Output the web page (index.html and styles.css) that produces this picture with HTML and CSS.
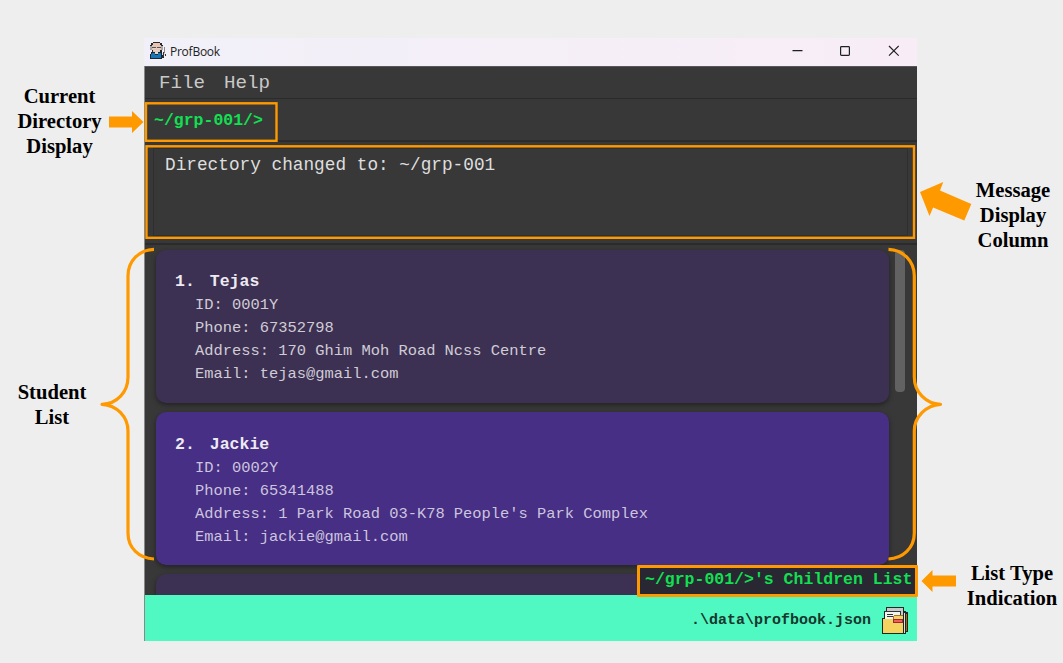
FILE: index.html
```html
<!DOCTYPE html>
<html lang="en">
<head>
<meta charset="utf-8">
<title>ProfBook</title>
<link rel="stylesheet" href="styles.css">
</head>
<body>
<main class="window">
  <header class="titlebar">
    <svg class="logo" width="18" height="18" viewBox="0 0 18 18">
      <path fill="#26262b" d="M4 0h7v1h2v2h1v5h-1v2H3V8H1V3h1V1h2z"/>
      <path fill="#e8c5b3" d="M4 1h7v2h1v5h-1v2H4V8H3V3h1z"/>
      <path fill="#aaa5a8" d="M1 4h2v4H1zM12 4h2v4h-2z"/>
      <path fill="#55525a" d="M3 5h4v1H3zM8 5h4v1H8z"/>
      <path fill="#ddd7d5" d="M4 6h3v1H4zM8 6h3v1H8zM5 8h5v1H5z"/>
      <path fill="#1b2634" d="M2 10h11v2h2v4h-2v1H1v-5h1z"/>
      <path fill="#1675b4" d="M3 11h3v2h3v-2h3v5H2v-4h1z"/>
      <path fill="#f0d5c4" d="M6 10h3v2H6zM13 11h3v2h-3z"/>
      <path fill="#8c8589" d="M15 5h1v6h-1z"/>
      <path fill="#34323a" d="M14 10h1v5h-1zM16 12h1v2h-1z"/>
    </svg>
    <span class="app-name">ProfBook</span>
    <svg class="controls" width="108" height="12" viewBox="0 0 108 12" fill="none" stroke="#202020" stroke-width="1.2">
      <path d="M1.500 5.600h10M98 1l9.700 9.700M107.700 1L98 10.700"/>
      <rect x="49.600" y="1.600" width="8.800" height="8.800" rx=".8"/>
    </svg>
  </header>
  <nav class="menu"><span>File</span><span>Help</span></nav>
  <section class="directory">~/grp-001/&gt;</section>
  <section class="message"><div class="message-box">Directory changed to: ~/grp-001</div></section>
  <section class="students">
    <div class="cards">
      <article class="card">
        <h2><span>1.</span><span>Tejas</span></h2>
        <p>ID: 0001Y</p><p>Phone: 67352798</p><p>Address: 170 Ghim Moh Road Ncss Centre</p><p>Email: tejas@gmail.com</p>
      </article>
      <article class="card card-alt">
        <h2><span>2.</span><span>Jackie</span></h2>
        <p>ID: 0002Y</p><p>Phone: 65341488</p><p>Address: 1 Park Road 03-K78 People's Park Complex</p><p>Email: jackie@gmail.com</p>
      </article>
      <article class="card"></article>
    </div>
    <div class="scrollbar"></div>
  </section>
  <footer class="footer">
    <span>.\data\profbook.json</span>
    <svg width="26" height="27" viewBox="0 0 26 27" shape-rendering="crispEdges">
      <path fill="#1c2825" d="M4 0h18v4h2v1h2v20h-2v2H0V11h2V4h2z"/>
      <path fill="#c7cac9" d="M5 1h16v9H5z"/>
      <path fill="#f3f3f2" d="M3 5h15v7H3z"/>
      <path fill="#303633" d="M3 4h15v1H3zM18 4h1v5h-1zM5 7h6v1H5zM5 9h8v1H5z"/>
      <path fill="#a9680a" d="M24 7h1v17h-1z"/>
      <path fill="#e7dfcf" d="M22 6h1v20h-1z"/>
      <path fill="#f4d35e" d="M1 12h10V9h2V8h8v18H1z"/>
      <path fill="#9c762b" d="M12 8h9v1h-9zM11 9h1v3h-1z"/>
      <path fill="#9f2831" d="M11 12h10v4H11z"/>
      <path fill="#f25b62" d="M12 13h8v2h-8z"/>
    </svg>
  </footer>
</main>
<div class="list-type">~/grp-001/&gt;'s Children List</div>
<svg class="marks" width="1063" height="663" viewBox="0 0 1063 663">
  <g fill="none" stroke="#ff9900" stroke-width="2.4">
    <rect x="146" y="103.3" width="130.5" height="37.5"/>
    <rect x="146.5" y="146.3" width="767.5" height="91.5"/>
  </g>
  <g fill="none" stroke="#ff9900" stroke-width="3.2" stroke-linejoin="round">
    <path d="M154 249.4C139 249.8 128 261 128 276V377C128 392 117 404 102 404.3C117 405 128 417 128 431V533C128 548 139 558.5 154 559"/>
    <path d="M888.500 249.400C903 249.800 914.300 261 914.300 276V377C914.300 392 926 404 940.500 404.300C926 405 914.300 417 914.300 431V533C914.300 548 903 558.500 888.500 559"/>
  </g>
  <g fill="#ff9900">
    <path d="M109 116.500h23v-5.500l11.500 11-11.500 11v-5.500h-23z"/>
    <path d="M920 192l23.300-10-3.300 8.500 31.300 13.500-7 16.500-31.200-13-3.600 8.500z"/>
    <path d="M956 575.500h-23.500v-5.500l-11 11 11 11v-5.500h23.500z"/>
  </g>
</svg>
<div class="note note-directory">Current<br>Directory<br>Display</div>
<div class="note note-message">Message<br>Display<br>Column</div>
<div class="note note-students">Student<br>List</div>
<div class="note note-type">List Type<br>Indication</div>
</body>
</html>
```
FILE: styles.css
```css
* { box-sizing: border-box; }
body {
  margin: 0;
  padding: 38px 0 0 144px;
  width: 1063px;
  height: 663px;
  overflow: hidden;
  background: #eeeeee;
  font-family: "Liberation Mono", monospace;
}
.window {
  width: 773px;
  height: 603px;
  display: flex;
  flex-direction: column;
  background: #383838;
  border-left: 1px solid #888;
}
.titlebar {
  flex: 0 0 28px;
  display: flex;
  align-items: center;
  margin-left: -1px;
  padding: 0 18px 2px 5px;
  background: linear-gradient(90deg, #f1f0f8, #f8edf7);
}
.app-name {
  margin: 1px 0 0 3px;
  font: 12px/20px "Open Sans", sans-serif;
  letter-spacing: -.25px;
  color: #222;
}
.controls { margin-left: auto; }
.menu {
  flex: 0 0 32px;
  min-height: 0;
  display: flex;
  gap: 19px;
  padding-left: 14px;
  border-top: 1px solid #575757;
  font-size: 19.2px;
  line-height: 32px;
  color: #c9c9c9;
}
.directory {
  flex: 0 0 44px;
  height: 44px;
  min-height: 0;
  padding-left: 9px;
  border-top: 1px solid #2b2b2b;
  border-bottom: 2px solid #2b2b2b;
  font-size: 16.5px;
  line-height: 44px;
  font-weight: bold;
  color: #12df51;
}
.message {
  flex: 0 0 103px;
  padding: 6px 9px 7px 8px;
  border-bottom: 2px solid #2b2b2b;
}
.message-box {
  height: 88px;
  padding-left: 11px;
  border: 1px solid #2f2f2f;
  font-size: 17.75px;
  line-height: 32px;
  color: #dedede;
}
.students {
  flex: 0 0 350px;
  min-height: 0;
  display: flex;
  gap: 6px;
  padding: 5px 12px 0 11px;
  overflow: hidden;
}
.cards {
  width: 733px;
  display: flex;
  flex-direction: column;
  gap: 9px;
}
.card {
  flex: 0 0 153px;
  padding: 20px 0 0 39px;
  border-radius: 10px;
  background: #3d3153;
  box-shadow: 0 2px 5px rgba(0, 0, 0, .4);
  color: #d0ccd6;
  font-size: 15.42px;
  line-height: 23px;
}
.card-alt { padding-top: 21px; background: #462f84; color: #cdc4df; }
.card h2 {
  display: flex;
  gap: 15px;
  margin: 0 0 1px -20px;
  color: #eeeaf2;
  font-size: 16.5px;
  line-height: 23px;
}
.card p { margin: 0; }
.scrollbar {
  width: 10px;
  height: 142px;
  border-radius: 4px;
  background: #626262;
}
.footer {
  flex: 0 0 46px;
  display: flex;
  align-items: center;
  justify-content: flex-end;
  gap: 11px;
  padding: 4px 9px 0 0;
  background: #51f9c2;
  color: #16372d;
  font-size: 15px;
  font-weight: bold;
}
.list-type {
  position: absolute;
  left: 637px;
  top: 565px;
  width: 281px;
  height: 32px;
  padding-left: 5px;
  border: 3px solid #ff9900;
  border-radius: 1px;
  background: #292731;
  color: #12df51;
  font-size: 16.5px;
  line-height: 23px;
  font-weight: bold;
  white-space: nowrap;
}
.marks { position: absolute; left: 0; top: 0; }
.note {
  position: absolute;
  color: #000;
  font: bold 20.6px/25px "Liberation Serif", serif;
  text-align: center;
  white-space: nowrap;
  transform: translateX(-50%);
}
.note-directory { left: 59.5px; top: 84px; }
.note-message { left: 1013px; top: 178px; }
.note-students { left: 52px; top: 380px; }
.note-type { left: 1012px; top: 561px; }
```
